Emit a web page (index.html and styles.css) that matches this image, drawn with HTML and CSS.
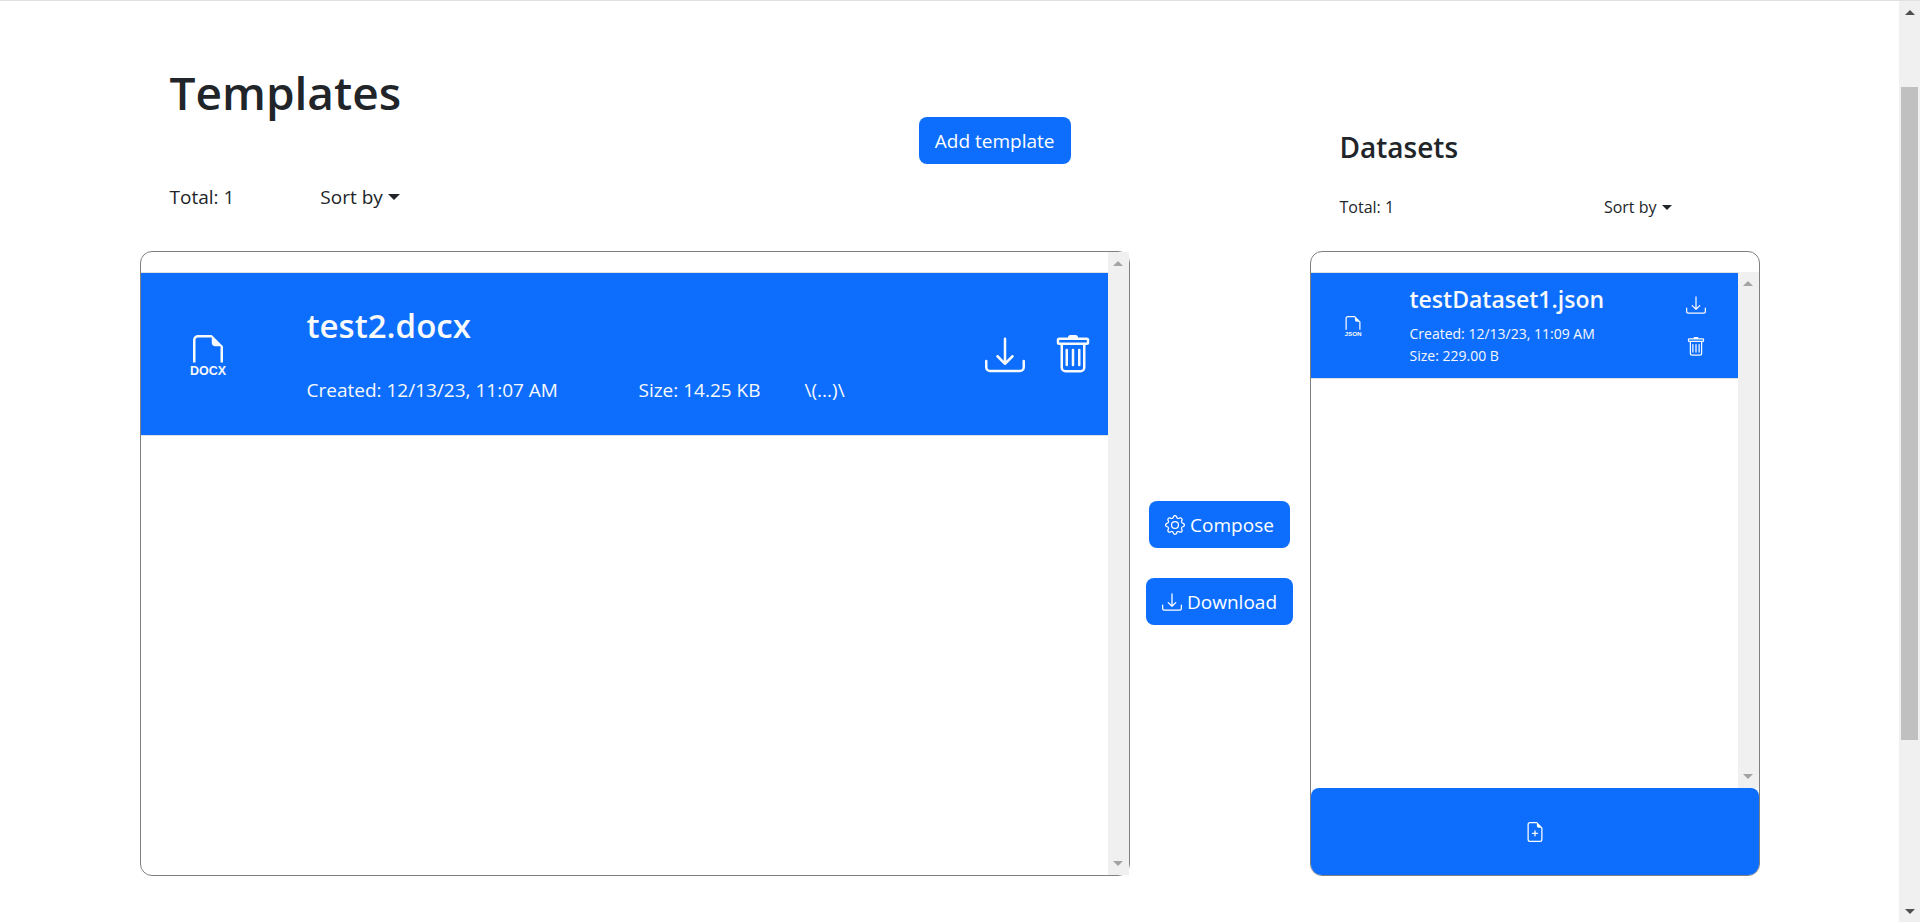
FILE: index.html
```
<!DOCTYPE html>
<html lang="en">
<head>
<meta charset="utf-8">
<meta name="viewport" content="width=device-width, initial-scale=1">
<title>Templates and datasets</title>
<link rel="stylesheet" href="styles.css">
</head>
<body>
<svg class="defs" aria-hidden="true">
  <symbol id="download" viewBox="0 0 16 16"><path d="M.5 9.9a.5.5 0 0 1 .5.5v2.5a1 1 0 0 0 1 1h12a1 1 0 0 0 1-1v-2.5a.5.5 0 0 1 1 0v2.5a2 2 0 0 1-2 2H2a2 2 0 0 1-2-2v-2.5a.5.5 0 0 1 .5-.5z"/><path d="M7.646 11.854a.5.5 0 0 0 .708 0l3-3a.5.5 0 0 0-.708-.708L8.500 10.293V1.500a.5.5 0 0 0-1 0v8.793L5.354 8.146a.5.5 0 1 0-.708.708l3 3z"/></symbol>
  <symbol id="trash" viewBox="0 0 16 16"><path d="M5.500 5.500A.5.5 0 0 1 6 6v6a.5.5 0 0 1-1 0V6a.5.5 0 0 1 .5-.5zm2.500 0a.5.5 0 0 1 .5.5v6a.5.5 0 0 1-1 0V6a.5.5 0 0 1 .5-.5zm3 .5a.5.5 0 0 0-1 0v6a.5.5 0 0 0 1 0V6z"/><path fill-rule="evenodd" d="M14.500 3a1 1 0 0 1-1 1H13v9a2 2 0 0 1-2 2H5a2 2 0 0 1-2-2V4h-.5a1 1 0 0 1-1-1V2a1 1 0 0 1 1-1H6a1 1 0 0 1 1-1h2a1 1 0 0 1 1 1h3.500a1 1 0 0 1 1 1v1zM4.118 4 4 4.059V13a1 1 0 0 0 1 1h6a1 1 0 0 0 1-1V4.059L11.882 4H4.118zM2.500 3V2h11v1h-11z"/></symbol>
  <symbol id="file" viewBox="0 0 16 16"><path d="M14 4.500V11h-1V4.500h-2A1.500 1.500 0 0 1 9.500 3V1H4a1 1 0 0 0-1 1v9H2V2a2 2 0 0 1 2-2h5.500L14 4.500z"/></symbol>
  <symbol id="file-plus" viewBox="0 0 16 16"><path d="M8 6.500a.5.5 0 0 1 .5.5v1.500H10a.5.5 0 0 1 0 1H8.500V11a.5.5 0 0 1-1 0V9.500H6a.5.5 0 0 1 0-1h1.500V7a.5.5 0 0 1 .5-.5z"/><path d="M14 4.500V14a2 2 0 0 1-2 2H4a2 2 0 0 1-2-2V2a2 2 0 0 1 2-2h5.500L14 4.500zm-3 0A1.500 1.500 0 0 1 9.500 3V1H4a1 1 0 0 0-1 1v12a1 1 0 0 0 1 1h8a1 1 0 0 0 1-1V4.500h-2z"/></symbol>
  <symbol id="gear" viewBox="0 0 16 16"><path d="M8 4.754a3.246 3.246 0 1 0 0 6.492 3.246 3.246 0 0 0 0-6.492zM5.754 8a2.246 2.246 0 1 1 4.492 0 2.246 2.246 0 0 1-4.492 0z"/><path d="M9.796 1.343c-.527-1.790-3.065-1.790-3.592 0l-.094.319a.873.873 0 0 1-1.255.520l-.292-.160c-1.640-.892-3.433.902-2.540 2.541l.159.292a.873.873 0 0 1-.520 1.255l-.319.094c-1.790.527-1.790 3.065 0 3.592l.319.094a.873.873 0 0 1 .520 1.255l-.160.292c-.892 1.640.901 3.434 2.541 2.540l.292-.159a.873.873 0 0 1 1.255.520l.094.319c.527 1.790 3.065 1.790 3.592 0l.094-.319a.873.873 0 0 1 1.255-.520l.292.160c1.640.893 3.434-.902 2.540-2.541l-.159-.292a.873.873 0 0 1 .520-1.255l.319-.094c1.790-.527 1.790-3.065 0-3.592l-.319-.094a.873.873 0 0 1-.520-1.255l.160-.292c.893-1.640-.902-3.433-2.541-2.540l-.292.159a.873.873 0 0 1-1.255-.520l-.094-.319zm-2.633.283c.246-.835 1.428-.835 1.674 0l.094.319a1.873 1.873 0 0 0 2.693 1.115l.291-.160c.764-.415 1.600.420 1.184 1.185l-.159.292a1.873 1.873 0 0 0 1.116 2.692l.318.094c.835.246.835 1.428 0 1.674l-.319.094a1.873 1.873 0 0 0-1.115 2.693l.160.291c.415.764-.420 1.600-1.185 1.184l-.291-.159a1.873 1.873 0 0 0-2.693 1.116l-.094.318c-.246.835-1.428.835-1.674 0l-.094-.319a1.873 1.873 0 0 0-2.692-1.115l-.292.160c-.764.415-1.600-.420-1.184-1.185l.159-.291A1.873 1.873 0 0 0 1.945 8.930l-.319-.094c-.835-.246-.835-1.428 0-1.674l.319-.094A1.873 1.873 0 0 0 3.060 4.377l-.160-.292c-.415-.764.420-1.600 1.185-1.184l.292.159a1.873 1.873 0 0 0 2.692-1.115l.094-.319z"/></symbol>
</svg>

<main class="page">
  <div class="workspace">
    <header class="head head-templates">
      <div class="head-stack">
        <h1>Templates</h1>
        <div class="summary">
          <span>Total: 1</span>
          <button class="sort" type="button">Sort by<span class="caret"></span></button>
        </div>
      </div>
      <button class="btn" type="button">Add template</button>
    </header>

    <header class="head head-datasets">
      <h2>Datasets</h2>
      <div class="summary">
        <span>Total: 1</span>
        <button class="sort" type="button">Sort by<span class="caret"></span></button>
      </div>
    </header>

    <section class="panel panel-templates" aria-label="Templates">
      <div class="list">
        <article class="item template">
          <svg class="icon large" viewBox="0 0 16 16" role="img" aria-label="DOCX file"><use href="#file"/><text class="ext" x="8" y="15.800" font-size="5">DOCX</text></svg>
          <div class="details">
            <h3>test2.docx</h3>
            <div class="meta">
              <span>Created: 12/13/23, 11:07 AM</span>
              <span>Size: 14.25 KB</span>
              <span>\(...)\</span>
            </div>
          </div>
          <div class="actions">
            <button class="icon-btn" type="button" aria-label="Download template"><svg class="icon large"><use href="#download"/></svg></button>
            <button class="icon-btn" type="button" aria-label="Delete template"><svg class="icon large"><use href="#trash"/></svg></button>
          </div>
        </article>
      </div>
      <div class="scrollbar" aria-hidden="true"><span class="up"></span><span class="down"></span></div>
    </section>

    <div class="commands">
      <button class="btn" type="button"><svg class="icon"><use href="#gear"/></svg>Compose</button>
      <button class="btn" type="button"><svg class="icon"><use href="#download"/></svg>Download</button>
    </div>

    <section class="panel panel-datasets" aria-label="Datasets">
      <div class="scroller">
        <div class="list">
          <article class="item dataset">
            <svg class="icon" viewBox="0 0 16 16" role="img" aria-label="JSON file"><use href="#file"/><text class="ext" x="8" y="15.800" font-size="5">JSON</text></svg>
            <div class="details">
              <h3>testDataset1.json</h3>
              <p>Created: 12/13/23, 11:09 AM</p>
              <p>Size: 229.00 B</p>
            </div>
            <div class="actions">
              <button class="icon-btn" type="button" aria-label="Download dataset"><svg class="icon"><use href="#download"/></svg></button>
              <button class="icon-btn" type="button" aria-label="Delete dataset"><svg class="icon"><use href="#trash"/></svg></button>
            </div>
          </article>
        </div>
        <div class="scrollbar" aria-hidden="true"><span class="up"></span><span class="down"></span></div>
      </div>
      <button class="add-dataset" type="button" aria-label="Add dataset"><svg class="icon"><use href="#file-plus"/></svg></button>
    </section>
  </div>
</main>
<div class="scrollbar page-scrollbar" aria-hidden="true"><span class="up"></span><span class="thumb"></span><span class="down"></span></div>
</body>
</html>
```
FILE: styles.css
```
* { box-sizing: border-box; }

body {
  margin: 0;
  min-height: 100vh;
  display: flex;
  border-top: 1px solid #e0e0e0;
  background: #fff;
  color: #212529;
  font-family: "Open Sans", "Noto Sans", sans-serif;
  font-size: 19px;
  line-height: 30px;
}

h1, h2, h3, p { margin: 0; font-weight: 600; }
p { font-weight: 400; }
button { font: inherit; color: inherit; border: 0; padding: 0; background: none; cursor: pointer; }

.defs { position: absolute; width: 0; height: 0; }
.icon { width: 20px; height: 20px; fill: currentColor; display: block; flex: none; overflow: visible; }
.icon.large { width: 40px; height: 40px; }
.ext { font-family: "Liberation Sans", sans-serif; font-weight: 700; text-anchor: middle; }

.page { flex: 1; padding: 0 15px; }

.workspace {
  max-width: 1620px;
  margin: 0 auto;
  display: grid;
  grid-template-columns: 11fr 2fr 5fr;
  grid-template-rows: 250px minmax(625px, auto);
}

.head { padding: 0 30px 39px; }
.head-templates { display: flex; align-items: flex-end; justify-content: space-between; padding-right: 59px; }
.head-templates .btn { margin-bottom: 48px; }
.head-stack { display: grid; gap: 60px; }
h1 { font-size: 46px; line-height: 60px; }
.head-datasets { grid-column: 3; display: flex; flex-direction: column; justify-content: flex-end; gap: 27px; padding-bottom: 29px; }
h2 { font-size: 28px; line-height: 36px; }

.summary { display: flex; }
.head-templates .summary { gap: 86px; }
.head-datasets .summary { font-size: 16px; justify-content: space-between; padding-right: 58px; }
.sort { display: flex; align-items: center; gap: 5px; }
.caret { border: 6px solid transparent; border-top-color: currentColor; border-bottom: 0; }
.head-datasets .caret { border-width: 5px 5px 0; }

.btn {
  display: flex;
  align-items: center;
  gap: 5px;
  padding: 9px 16px 8px;
  border-radius: 8px;
  background: #0d6efd;
  color: #fff;
}

.panel { border: 1px solid #808080; border-radius: 12px; display: flex; }
.list { flex: 1; min-width: 0; }
.item {
  display: flex;
  align-items: center;
  background: #0d6efd;
  color: #f8f9fa;
  border: solid #dee2e6;
  border-width: 1px 0;
}

.panel-templates .list { padding-top: 20px; }
.template { min-height: 164px; padding: 2px 15px 0 47px; }
.template .details { flex: 1; padding-left: 79px; }
.template h3 { font-size: 33px; line-height: 42px; margin-bottom: 28px; }
.meta { display: grid; grid-template-columns: 332px 166px 1fr; }
.template .actions { display: flex; gap: 28px; }
.icon-btn { display: block; }

.commands { display: flex; flex-direction: column; align-items: center; justify-content: center; gap: 30px; padding-bottom: 2px; }

.panel-datasets { flex-direction: column; padding-top: 20px; }
.scroller { flex: 1; display: flex; }
.dataset { min-height: 107px; padding: 0 32px; }
.dataset .details { flex: 1; padding-left: 47px; font-size: 14px; line-height: 22px; }
.dataset h3 { font-size: 23px; line-height: 30px; margin-bottom: 9px; }
.dataset .actions { display: grid; gap: 22px; }
.add-dataset { display: flex; align-items: center; justify-content: center; height: 87px; border-radius: 8px 8px 11px 11px; background: #0d6efd; color: #fff; }

.scrollbar {
  width: 21px;
  flex: none;
  display: flex;
  flex-direction: column;
  align-items: center;
  justify-content: space-between;
  padding: 9px 0;
  background: #f0f0f0;
  color: #a3a3a3;
}
.up, .down { border: 5px solid transparent; }
.up { border-top: 0; border-bottom-color: currentColor; }
.down { border-bottom: 0; border-top-color: currentColor; }
.page-scrollbar { color: #505050; justify-content: flex-start; padding: 9px 0 8px; }
.thumb { width: 17px; flex: 652 0 0; margin: 72px 0 0; background: #c0c0c0; }
.page-scrollbar .down { margin-top: 169px; }
```
